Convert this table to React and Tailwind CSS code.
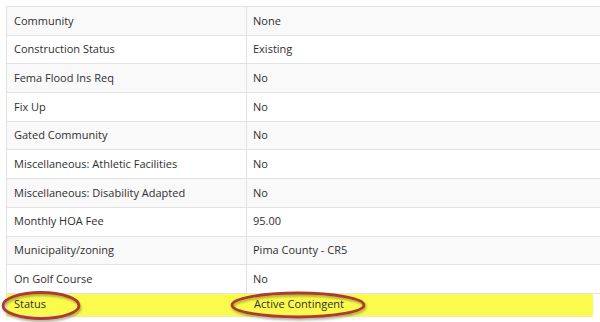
import React from "react";

const rows = [
  ["Community", "None"],
  ["Construction Status", "Existing"],
  ["Fema Flood Ins Req", "No"],
  ["Fix Up", "No"],
  ["Gated Community", "No"],
  ["Miscellaneous: Athletic Facilities", "No"],
  ["Miscellaneous: Disability Adapted", "No"],
  ["Monthly HOA Fee", "95.00"],
  ["Municipality/zoning", "Pima County - CR5"],
  ["On Golf Course", "No"],
];

export default function App() {
  return (
    <div className="relative w-[600px] h-[322px] overflow-hidden bg-white pt-[6px] pl-[6px] font-['Open_Sans',sans-serif] text-[11px] text-[#2f2f2f]">
      <div className="w-[600px] border-t border-l border-[#e2e2e2]">
        {rows.map(([k, v], i) => (
          <div
            key={k}
            className={`flex h-[28.7px] border-b border-[#e2e2e2] ${i % 2 === 0 ? "bg-[#f9f9f9]" : "bg-white"}`}
          >
            <div className="w-[240px] shrink-0 border-r border-[#e2e2e2] pl-[7px] flex items-center">{k}</div>
            <div className="flex-1 pl-[6px] flex items-center">{v}</div>
          </div>
        ))}
        <div className="flex h-[23px] w-[586px] bg-[#fbfb4d] border-b-[2px] border-[#f3f38a]">
          <div className="w-[240px] shrink-0 pl-[7px] flex items-center">Status</div>
          <div className="flex-1 pl-[7px] flex items-center">Active Contingent</div>
        </div>
      </div>
      <svg className="absolute left-0 top-0 pointer-events-none" width="600" height="322">
        <defs>
          <filter id="sh" x="-20%" y="-50%" width="140%" height="200%">
            <feDropShadow dx="1" dy="2" stdDeviation="1.3" floodColor="#3a3a00" floodOpacity="0.4" />
          </filter>
        </defs>
        <ellipse cx="41" cy="305.5" rx="38" ry="13" fill="none" stroke="#ae3a32" strokeWidth="2.8" filter="url(#sh)" />
        <ellipse cx="298" cy="305" rx="66" ry="12" fill="none" stroke="#ae3a32" strokeWidth="2.8" filter="url(#sh)" />
      </svg>
    </div>
  );
}
